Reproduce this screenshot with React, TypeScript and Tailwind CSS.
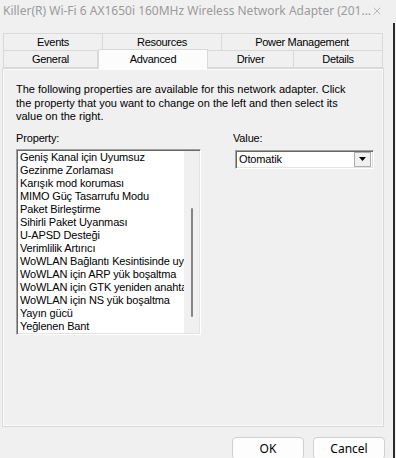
import { X } from "lucide-react";

const properties = [
  "Geniş Kanal için Uyumsuz",
  "Gezinme Zorlaması",
  "Karışık mod koruması",
  "MIMO Güç Tasarrufu Modu",
  "Paket Birleştirme",
  "Sihirli Paket Uyanması",
  "U-APSD Desteği",
  "Verimlilik Artırıcı",
  "WoWLAN Bağlantı Kesintisinde uyan",
  "WoWLAN için ARP yük boşaltma",
  "WoWLAN için GTK yeniden anahtarlama",
  "WoWLAN için NS yük boşaltma",
  "Yayın gücü",
  "Yeğlenen Bant",
];

const sans = "font-['Liberation_Sans',Arial,sans-serif]";

export default function App() {
  return (
    <div className="relative h-[458px] w-[396px] overflow-hidden bg-[#f0f0f0] text-black">
      {/* title bar */}
      <div className="flex h-[22px] items-center justify-between pl-[3px] pr-[13px]">
        <span className="whitespace-nowrap font-['Noto_Sans',sans-serif] text-[12px] text-[#9a9a9a]">
          Killer(R) Wi-Fi 6 AX1650i 160MHz Wireless Network Adapter (201...
        </span>
        <X size={12} strokeWidth={1} className="text-[#7a7a7a]" />
      </div>

      {/* tabs */}
      <div className={`ml-[3px] mt-[11px] w-[380px] text-[11px] tracking-[-0.3px] ${sans}`}>
        <div className="flex h-[18px]">
          <div className="flex w-[100px] items-center justify-center border border-[#d9d9d9]">Events</div>
          <div className="flex w-[119px] items-center justify-center border border-l-0 border-[#d9d9d9]">Resources</div>
          <div className="flex w-[161px] items-center justify-center border border-l-0 border-[#d9d9d9]">Power Management</div>
        </div>
        <div className="flex h-[17px]">
          <div className="flex h-[17px] w-[95px] items-center justify-center border border-t-0 border-[#d9d9d9]">General</div>
          <div className="relative z-10 -mb-[3px] -mt-[2px] flex h-[20px] w-[110px] justify-center border border-b-0 border-[#d9d9d9] bg-[#fcfcfc] pt-[1px]">
            Advanced
          </div>
          <div className="flex h-[17px] w-[86px] items-center justify-center border border-t-0 border-l-0 border-[#d9d9d9]">Driver</div>
          <div className="flex h-[17px] w-[89px] items-center justify-center border border-t-0 border-l-0 border-[#d9d9d9]">Details</div>
        </div>
      </div>

      {/* panel */}
      <div className={`ml-[2px] h-[359px] w-[382px] border border-[#d9d9d9] shadow-[inset_1px_1px_0_#fbfbfb,inset_-1px_-1px_0_#fbfbfb] ${sans} text-[11px]`}>
        <p className="ml-[13px] mt-[14px] whitespace-nowrap leading-[13.5px]">
          The following properties are available for this network adapter. Click
          <br />
          the property that you want to change on the left and then select its
          <br />
          value on the right.
        </p>

        <div className="mt-[8px] flex tracking-[-0.15px]">
          <div className="ml-[13px] w-[185px]">
            <div className="leading-[13px]">Property:</div>
            <div className="mt-[4px] flex h-[186px] border border-t-[#a0a0a0] border-l-[#a0a0a0] border-r-white border-b-white shadow-[inset_1px_1px_0_#696969,inset_-1px_-1px_0_#e3e3e3]">
              <ul className="ml-[1px] mt-[1px] h-[182px] w-[166px] overflow-hidden bg-white">
                {properties.map((p) => (
                  <li key={p} className="h-[13px] whitespace-nowrap pl-[2px] leading-[13px]">
                    {p}
                  </li>
                ))}
              </ul>
              <div className="mt-[1px] flex h-[182px] w-[15px] justify-center bg-[#f0f0f0] pt-[57px]">
                <div className="h-[109px] w-[2px] rounded-full bg-[#858585]" />
              </div>
            </div>
          </div>

          <div className="ml-[32px] w-[141px]">
            <div className="leading-[13px]">Value:</div>
            <div className="ml-[2px] mt-[5px] flex h-[19px] items-center border border-t-[#a0a0a0] border-l-[#a0a0a0] border-r-white border-b-white bg-white shadow-[inset_1px_1px_0_#696969,inset_-1px_-1px_0_#e3e3e3]">
              <span className="flex-1 pl-[3px] leading-[13px]">Otomatik</span>
              <div className="mr-[2px] flex h-[15px] w-[17px] items-center justify-center border border-[#adadad] bg-[#f0f0f0]">
                <svg width="7" height="4" viewBox="0 0 7 4">
                  <path d="M0 0h7L3.5 4z" fill="#000" />
                </svg>
              </div>
            </div>
          </div>
        </div>
      </div>

      {/* buttons */}
      <div className="mt-[10px] flex justify-end gap-[9px] pr-[11px] font-['Noto_Sans',sans-serif] text-[12px]">
        <button className="h-[23px] w-[72px] rounded-[4px] border border-[#d0d0d0] bg-[#fdfdfd]">OK</button>
        <button className="h-[23px] w-[72px] rounded-[4px] border border-[#d0d0d0] bg-[#fdfdfd]">Cancel</button>
      </div>

      {/* edge of a neighbouring window */}
      <div className="absolute bottom-0 right-[1px] top-[23px] w-[2px] bg-[#2b2b2b]" />
    </div>
  );
}
